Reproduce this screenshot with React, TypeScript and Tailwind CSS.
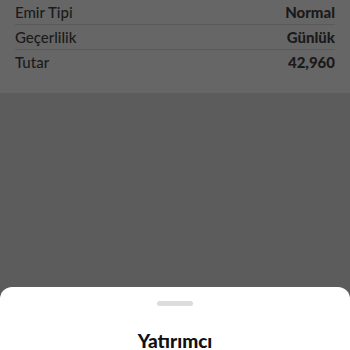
import React from 'react';

const rows = [
  { label: 'Emir Tipi', value: 'Normal' },
  { label: 'Geçerlilik', value: 'Günlük' },
  { label: 'Tutar', value: '42,960' },
];

const App: React.FC = () => {
  return (
    <div
      className="relative h-[350px] w-[350px] overflow-hidden bg-[#5c5c5c] flex flex-col"
      style={{ fontFamily: 'Lato, "Noto Sans", sans-serif' }}
    >
      {/* Order summary (dimmed) */}
      <div className="h-[93px] bg-[#666666] px-[15px]">
        {rows.map((r, i) => (
          <div
            key={r.label}
            className={`flex items-center justify-between h-[25px] text-[15px] text-[#1a1a1a] ${i < rows.length - 1 ? 'border-b border-[#5a5a5a]' : ''}`}
          >
            <span className="font-medium">{r.label}</span>
            <span className="font-black">{r.value}</span>
          </div>
        ))}
      </div>
      <div className="flex-1" />
      {/* Bottom sheet */}
      <div className="absolute left-0 right-0 top-[287px] bottom-0 bg-white rounded-t-[12px] flex flex-col items-center">
        <div className="mt-[14px] h-[5px] w-[36px] shrink-0 rounded-full bg-[#dcdcdc]" />
        <div className="mt-[26px] text-[19px] font-black leading-[18px] text-[#111111]">Yatırımcı</div>
      </div>
    </div>
  );
};

export default App;
